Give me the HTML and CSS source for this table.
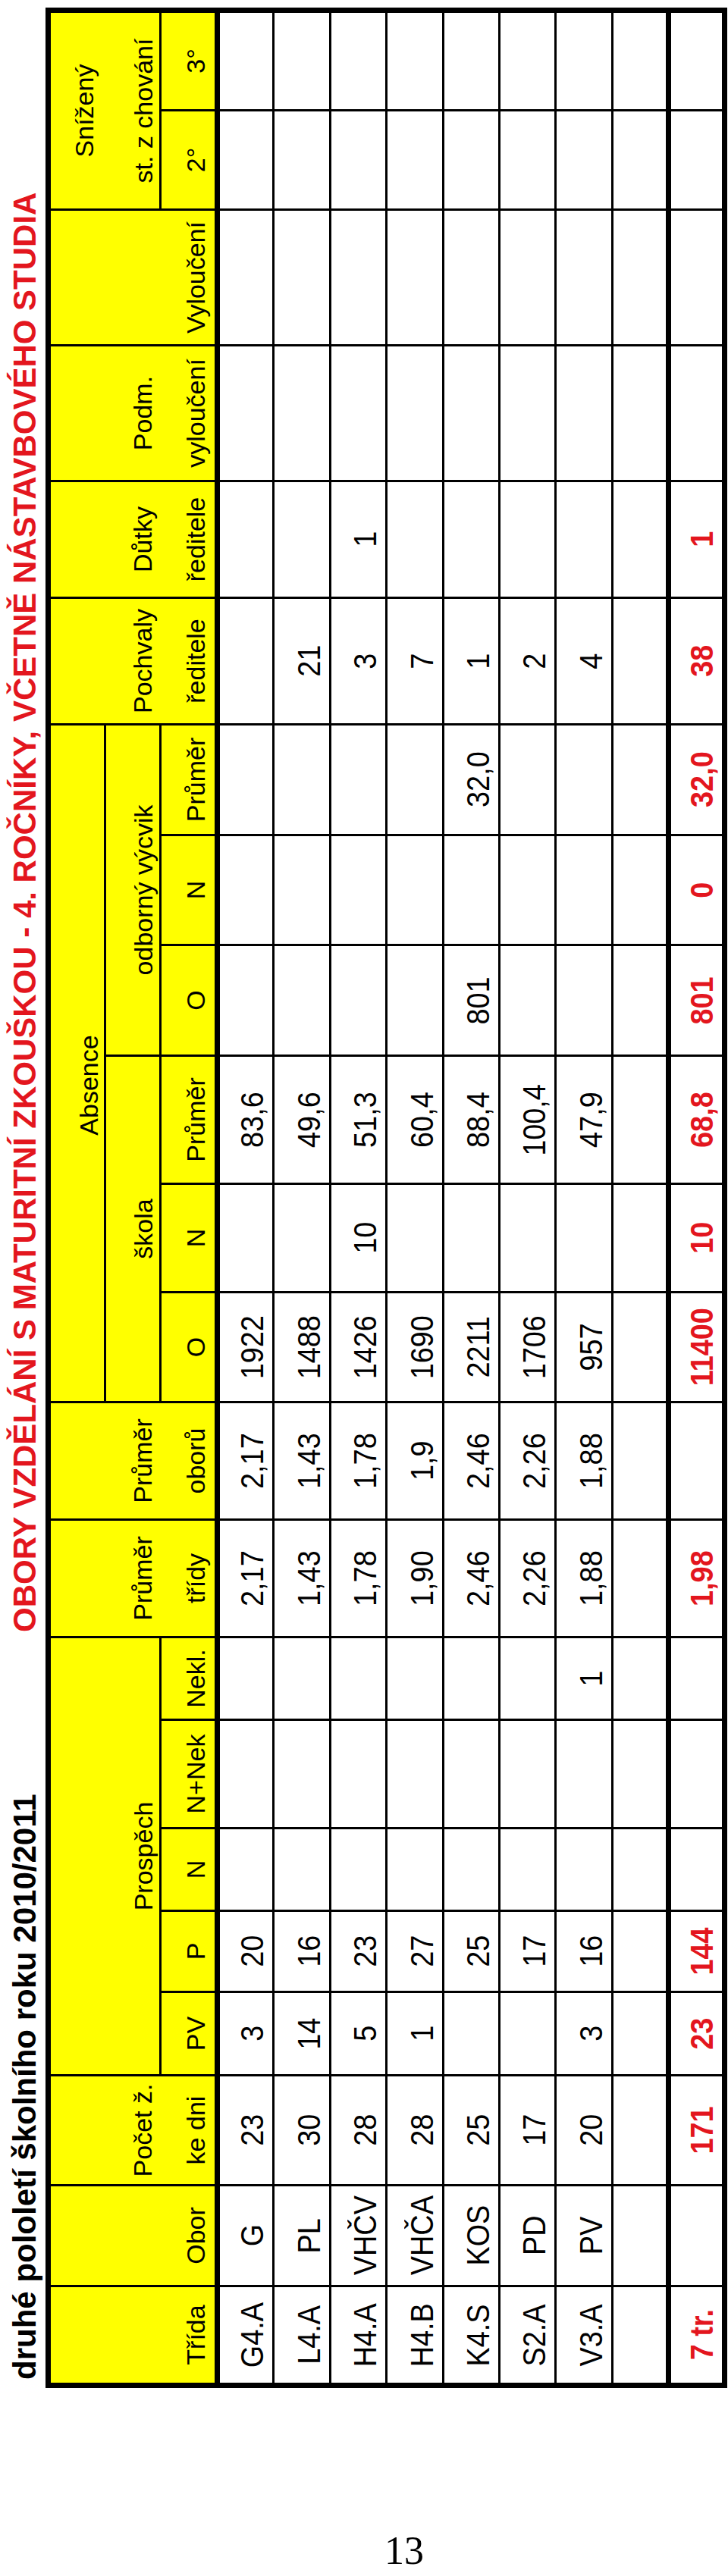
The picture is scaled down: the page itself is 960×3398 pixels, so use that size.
FILE: index.html
```html
<!DOCTYPE html>
<html lang="cs">
<head>
<meta charset="utf-8">
<title>Obory vzdělání s maturitní zkouškou</title>
<link rel="stylesheet" href="styles.css">
</head>
<body>
<div class="page">
  <div class="frame">
    <div class="sheet">
      <div class="titles">
        <span class="t-black">druhé pololetí školního roku 2010/2011</span>
        <span class="t-red">OBORY VZDĚLÁNÍ S MATURITNÍ ZKOUŠKOU - 4. ROČNÍKY, VČETNĚ NÁSTAVBOVÉHO STUDIA</span>
      </div>
      <table class="grid">
        <colgroup>
          <col class="c-trida"><col class="c-obor"><col class="c-pocet">
          <col class="c-pv"><col class="c-p"><col class="c-n"><col class="c-nnek"><col class="c-nekl">
          <col class="c-prt"><col class="c-pro">
          <col class="c-so"><col class="c-sn"><col class="c-spr">
          <col class="c-oo"><col class="c-on"><col class="c-opr">
          <col class="c-poch"><col class="c-dut"><col class="c-podm"><col class="c-vyl">
          <col class="c-s2"><col class="c-s3">
        </colgroup>
        <thead>
          <tr class="h1">
            <th rowspan="3">Třída</th>
            <th rowspan="3">Obor</th>
            <th rowspan="3"><div class="upper">Počet ž.</div><div>ke dni</div></th>
            <th colspan="5" rowspan="2" class="lvl2">Prospěch</th>
            <th rowspan="3"><div class="upper">Průměr</div><div>třídy</div></th>
            <th rowspan="3"><div class="upper">Průměr</div><div>oborů</div></th>
            <th colspan="6" class="lvl1 absence">Absence</th>
            <th rowspan="3"><div class="upper">Pochvaly</div><div>ředitele</div></th>
            <th rowspan="3"><div class="upper">Důtky</div><div>ředitele</div></th>
            <th rowspan="3"><div class="upper">Podm.</div><div>vyloučení</div></th>
            <th rowspan="3">Vyloučení</th>
            <th colspan="2" rowspan="2" class="lvl2"><div class="upper-far">Snížený</div><div>st. z chování</div></th>
          </tr>
          <tr class="h2">
            <th colspan="3" class="lvl2">škola</th>
            <th colspan="3" class="lvl2">odborný výcvik</th>
          </tr>
          <tr class="h3">
            <th>PV</th><th>P</th><th>N</th><th>N+Nek</th><th>Nekl.</th>
            <th>O</th><th>N</th><th>Průměr</th>
            <th>O</th><th>N</th><th>Průměr</th>
            <th>2°</th><th>3°</th>
          </tr>
        </thead>
        <tbody>
          <tr>
            <td><span class="v">G4.A</span></td><td><span class="v">G</span></td><td><span class="v">23</span></td>
            <td><span class="v">3</span></td><td><span class="v">20</span></td><td></td><td></td><td></td>
            <td><span class="v">2,17</span></td><td><span class="v">2,17</span></td>
            <td><span class="v">1922</span></td><td></td><td><span class="v">83,6</span></td>
            <td></td><td></td><td></td>
            <td></td><td></td><td></td><td></td><td></td><td></td>
          </tr>
          <tr>
            <td><span class="v">L4.A</span></td><td><span class="v">PL</span></td><td><span class="v">30</span></td>
            <td><span class="v">14</span></td><td><span class="v">16</span></td><td></td><td></td><td></td>
            <td><span class="v">1,43</span></td><td><span class="v">1,43</span></td>
            <td><span class="v">1488</span></td><td></td><td><span class="v">49,6</span></td>
            <td></td><td></td><td></td>
            <td><span class="v">21</span></td><td></td><td></td><td></td><td></td><td></td>
          </tr>
          <tr>
            <td><span class="v">H4.A</span></td><td><span class="v">VHČV</span></td><td><span class="v">28</span></td>
            <td><span class="v">5</span></td><td><span class="v">23</span></td><td></td><td></td><td></td>
            <td><span class="v">1,78</span></td><td><span class="v">1,78</span></td>
            <td><span class="v">1426</span></td><td><span class="v">10</span></td><td><span class="v">51,3</span></td>
            <td></td><td></td><td></td>
            <td><span class="v">3</span></td><td><span class="v">1</span></td><td></td><td></td><td></td><td></td>
          </tr>
          <tr>
            <td><span class="v">H4.B</span></td><td><span class="v">VHČA</span></td><td><span class="v">28</span></td>
            <td><span class="v">1</span></td><td><span class="v">27</span></td><td></td><td></td><td></td>
            <td><span class="v">1,90</span></td><td><span class="v">1,9</span></td>
            <td><span class="v">1690</span></td><td></td><td><span class="v">60,4</span></td>
            <td></td><td></td><td></td>
            <td><span class="v">7</span></td><td></td><td></td><td></td><td></td><td></td>
          </tr>
          <tr>
            <td><span class="v">K4.S</span></td><td><span class="v">KOS</span></td><td><span class="v">25</span></td>
            <td></td><td><span class="v">25</span></td><td></td><td></td><td></td>
            <td><span class="v">2,46</span></td><td><span class="v">2,46</span></td>
            <td><span class="v">2211</span></td><td></td><td><span class="v">88,4</span></td>
            <td><span class="v">801</span></td><td></td><td><span class="v">32,0</span></td>
            <td><span class="v">1</span></td><td></td><td></td><td></td><td></td><td></td>
          </tr>
          <tr>
            <td><span class="v">S2.A</span></td><td><span class="v">PD</span></td><td><span class="v">17</span></td>
            <td></td><td><span class="v">17</span></td><td></td><td></td><td></td>
            <td><span class="v">2,26</span></td><td><span class="v">2,26</span></td>
            <td><span class="v">1706</span></td><td></td><td><span class="v">100,4</span></td>
            <td></td><td></td><td></td>
            <td><span class="v">2</span></td><td></td><td></td><td></td><td></td><td></td>
          </tr>
          <tr>
            <td><span class="v">V3.A</span></td><td><span class="v">PV</span></td><td><span class="v">20</span></td>
            <td><span class="v">3</span></td><td><span class="v">16</span></td><td></td><td></td><td><span class="v">1</span></td>
            <td><span class="v">1,88</span></td><td><span class="v">1,88</span></td>
            <td><span class="v">957</span></td><td></td><td><span class="v">47,9</span></td>
            <td></td><td></td><td></td>
            <td><span class="v">4</span></td><td></td><td></td><td></td><td></td><td></td>
          </tr>
          <tr>
            <td></td><td></td><td></td><td></td><td></td><td></td><td></td><td></td>
            <td></td><td></td><td></td><td></td><td></td><td></td><td></td><td></td>
            <td></td><td></td><td></td><td></td><td></td><td></td>
          </tr>
        </tbody>
        <tfoot>
          <tr>
            <td><span class="v">7 tr.</span></td><td></td><td><span class="v">171</span></td>
            <td><span class="v">23</span></td><td><span class="v">144</span></td><td></td><td></td><td></td>
            <td><span class="v">1,98</span></td><td></td>
            <td><span class="v">11400</span></td><td><span class="v">10</span></td><td><span class="v">68,8</span></td>
            <td><span class="v">801</span></td><td><span class="v">0</span></td><td><span class="v">32,0</span></td>
            <td><span class="v">38</span></td><td><span class="v">1</span></td><td></td><td></td><td></td><td></td>
          </tr>
        </tfoot>
      </table>
    </div>
  </div>
  <div class="pagenum">13</div>
</div>
</body>
</html>
```

FILE: styles.css
```css
html, body {
  margin: 0;
  padding: 0;
  background: #ffffff;
}

body {
  font-family: "Liberation Sans", Arial, sans-serif;
  color: #000000;
}

.page {
  width: 960px;
  height: 3398px;
  overflow: hidden;
  display: flex;
  flex-direction: column;
}

.frame {
  flex: none;
  height: 3344px;
}

.sheet {
  width: 3140px;
  transform-origin: 0 0;
  transform: translate(8px, 3150px) rotate(-90deg);
}

.titles {
  display: flex;
  height: 52px;
  padding-left: 11px;
  font-size: 42px;
  line-height: 49px;
  font-weight: bold;
  white-space: nowrap;
}

.t-black {
  flex: none;
  width: 986px;
}

.t-red {
  color: #e3161e;
}

.grid {
  width: 3140px;
  table-layout: fixed;
  border-collapse: collapse;
  border: 7px solid #000000;
}

.grid thead {
  border-bottom: 7px solid #000000;
}

.grid th,
.grid td {
  border: 3px solid #000000;
  padding: 0;
  text-align: center;
  vertical-align: bottom;
  white-space: nowrap;
  overflow: hidden;
}

.grid th {
  background: #ffff00;
  font-weight: normal;
  font-size: 34px;
  padding-bottom: 5px;
}

.grid th.lvl1 {
  padding-bottom: 0;
}

.grid th.lvl2 {
  padding-bottom: 1px;
}

.grid th.absence {
  padding-right: 58px;
}

.upper {
  margin-bottom: 31px;
}

.upper-far {
  margin-bottom: 39px;
}

.grid .h1 { height: 75px; }
.grid .h2 { height: 73px; }
.grid .h3 { height: 75px; }

.grid tbody tr {
  height: 74.4px;
}

.grid tfoot tr {
  height: 74px;
  border-top: 7px solid #000000;
}

.grid td {
  font-size: 42px;
  padding-bottom: 2px;
}

.grid tfoot td {
  color: #e3161e;
  font-weight: bold;
}

.v {
  display: inline-block;
  transform: scaleX(0.9);
}

.c-trida { width: 131px; }
.c-obor { width: 133px; }
.c-pocet { width: 145px; }
.c-pv { width: 110px; }
.c-p { width: 107px; }
.c-n { width: 109px; }
.c-nnek { width: 143px; }
.c-nekl { width: 109px; }
.c-prt { width: 155px; }
.c-pro { width: 155px; }
.c-so { width: 145px; }
.c-sn { width: 143px; }
.c-spr { width: 169px; }
.c-oo { width: 146px; }
.c-on { width: 145px; }
.c-opr { width: 146px; }
.c-poch { width: 167px; }
.c-dut { width: 154px; }
.c-podm { width: 179px; }
.c-vyl { width: 179px; }
.c-s2 { width: 131px; }
.c-s3 { width: 132px; }

.pagenum {
  flex: none;
  padding-left: 106px;
  text-align: center;
  font-family: "Liberation Serif", "Times New Roman", serif;
  font-size: 52px;
  line-height: 42px;
}
```
